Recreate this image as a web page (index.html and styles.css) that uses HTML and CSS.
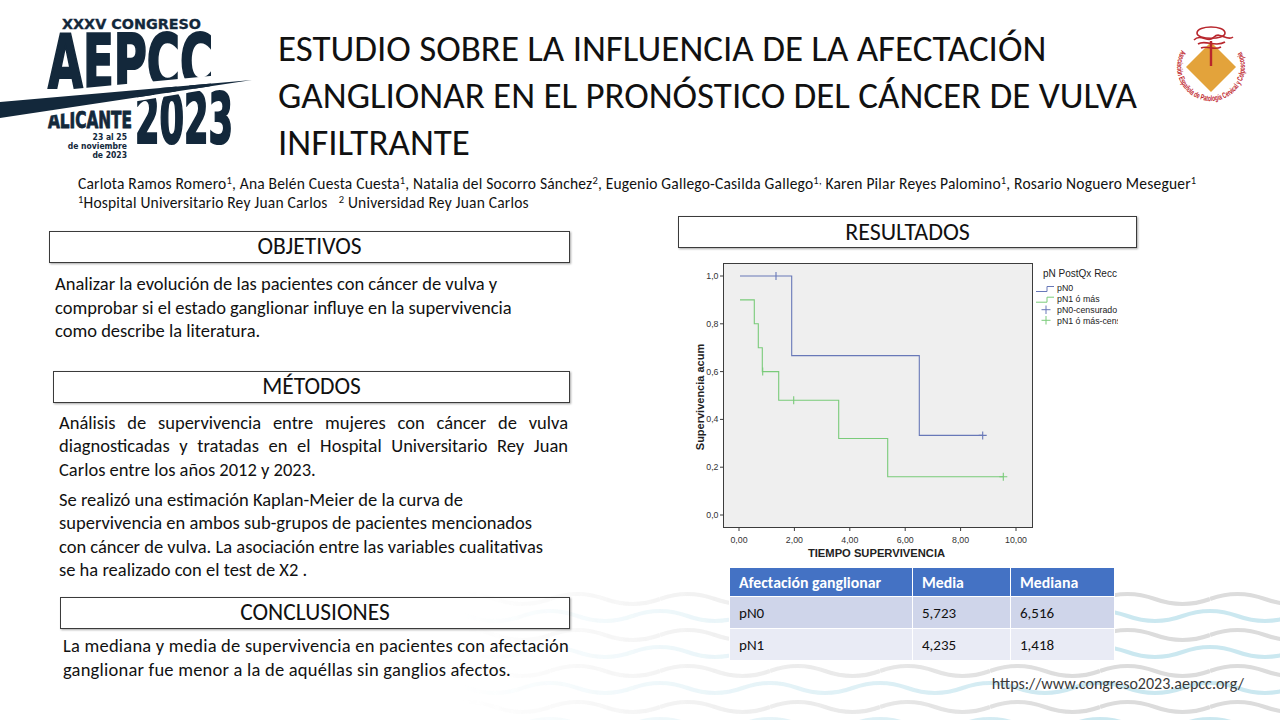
FILE: index.html
```html
<!DOCTYPE html>
<html lang="es">
<head>
<meta charset="utf-8">
<title>Estudio sobre la influencia de la afectación ganglionar</title>
<link rel="stylesheet" href="styles.css">
</head>
<body>
<div class="page">
  <svg class="waves" width="1280" height="130" viewBox="0 0 1280 130" aria-hidden="true">
    <defs>
      <pattern id="wv" width="110" height="36" patternUnits="userSpaceOnUse">
        <path d="M0 9 Q27.5 -1 55 9 T110 9" stroke="#d6d6d6" stroke-width="4" fill="none"/>
        <path d="M-27.5 26 Q0 16 27.5 26 T82.5 26 T137.5 26" stroke="#c3e4ee" stroke-width="4" fill="none"/>
      </pattern>
      <linearGradient id="fg" x1="0" x2="1" y1="0" y2="0">
        <stop offset="0.36" stop-color="#000"/>
        <stop offset="0.85" stop-color="#fff"/>
      </linearGradient>
      <mask id="fade"><rect width="1280" height="130" fill="url(#fg)"/></mask>
    </defs>
    <rect x="0" y="0" width="1280" height="130" fill="url(#wv)" mask="url(#fade)" opacity="0.85"/>
  </svg>

  <header class="top">
    <svg class="brand" width="260" height="165" viewBox="0 0 260 165">
      <g fill="#13283b" stroke="#13283b" font-family="'DejaVu Sans Condensed','DejaVu Sans',sans-serif" font-weight="700">
        <text x="62" y="28.5" font-size="14.5" stroke-width="0.3" textLength="139" lengthAdjust="spacingAndGlyphs">XXXV CONGRESO</text>
        <text x="48" y="88" font-size="75" stroke-width="2.2" textLength="165" lengthAdjust="spacingAndGlyphs">AEPCC</text>
        <text x="48" y="128" font-size="23" stroke-width="0.8" textLength="84" lengthAdjust="spacingAndGlyphs">ALICANTE</text>
        <text x="135" y="143" font-size="70" stroke-width="2.2" textLength="98" lengthAdjust="spacingAndGlyphs">2023</text>
        <g font-size="8.5" text-anchor="end" stroke-width="0">
          <text x="127" y="140">23 al 25</text>
          <text x="127" y="149">de noviembre</text>
          <text x="127" y="158">de 2023</text>
        </g>
      </g>
      <polygon points="0,96 252,72 252,80 0,102" fill="#fff"/>
      <polygon points="0,118 252,80 252,82 0,124" fill="#fff"/>
      <polygon points="0,102 252,80 0,118" fill="#13283b"/>
    </svg>
    <h1 class="title">ESTUDIO SOBRE LA INFLUENCIA DE LA AFECTACIÓN<br>GANGLIONAR EN EL PRONÓSTICO DEL CÁNCER DE VULVA<br>INFILTRANTE</h1>
    <svg class="seal" width="90" height="95" viewBox="0 0 90 95">
      <defs><path id="ring" d="M13.6 31 A34 34 0 1 0 72.4 31"/></defs>
      <polygon points="43,23 68,48 43,73 18,48" fill="#e3a33b"/>
      <g fill="none" stroke="#b8262c" stroke-width="1.6">
        <path d="M29 14 C29 6 57 6 57 14 C57 21 29 21 29 14Z"/>
        <path d="M26 21 C33 14 40 25 46 18 C52 12 59 23 65 18"/>
        <path d="M30 25 C37 20 48 29 57 23"/>
        <path d="M33 29 C40 26 46 32 53 28"/>
      </g>
      <path d="M43 22V47" stroke="#b8262c" stroke-width="2.4"/>
      <text font-size="8" font-weight="700" fill="#c0282e" font-family="'Liberation Sans',sans-serif"><textPath href="#ring" textLength="140" lengthAdjust="spacingAndGlyphs">Asociación Española de Patología Cervical y Colposcopia</textPath></text>
    </svg>
  </header>

  <div class="authors">
    <p>Carlota Ramos Romero<sup>1</sup>, Ana Belén Cuesta Cuesta<sup>1</sup>, Natalia del Socorro Sánchez<sup>2</sup>, Eugenio Gallego-Casilda Gallego<sup>1,</sup> Karen Pilar Reyes Palomino<sup>1</sup>, Rosario Noguero Meseguer<sup>1</sup></p>
    <p><sup>1</sup>Hospital Universitario Rey Juan Carlos&nbsp;&nbsp;&nbsp;<sup>2</sup> Universidad Rey Juan Carlos</p>
  </div>

  <main class="cols">
    <section class="left">
      <div class="sec sec-obj">
        <h2 class="box">OBJETIVOS</h2>
        <p class="text">Analizar la evolución de las pacientes con cáncer de vulva y<br>comprobar si el estado ganglionar influye en la supervivencia<br>como describe la literatura.</p>
      </div>
      <div class="sec sec-met">
        <h2 class="box">MÉTODOS</h2>
        <p class="text just"><span class="jl">Análisis de supervivencia entre mujeres con cáncer de vulva</span><span class="jl">diagnosticadas y tratadas en el Hospital Universitario Rey Juan</span><span>Carlos entre los años 2012 y 2023.</span></p>
        <p class="text second">Se realizó una estimación Kaplan-Meier de la curva de<br>supervivencia en ambos sub-grupos de pacientes mencionados<br>con cáncer de vulva. La asociación entre las variables cualitativas<br>se ha realizado con el test de X2 .</p>
      </div>
      <div class="sec sec-con">
        <h2 class="box">CONCLUSIONES</h2>
        <p class="text">La mediana y media de supervivencia en pacientes con afectación<br>ganglionar fue menor a la de aquéllas sin ganglios afectos.</p>
      </div>
    </section>

    <section class="right">
      <h2 class="box res-box">RESULTADOS</h2>
      <svg class="km" width="428" height="305" viewBox="0 0 428 305">
        <rect x="33.5" y="5.5" width="309" height="264" fill="#efefef" stroke="#3c3c3c" stroke-width="1"/>
        <g stroke="#3c3c3c" stroke-width="1">
          <path d="M30 18H33.5M30 65.8H33.5M30 113.6H33.5M30 161.4H33.5M30 209.2H33.5M30 257H33.5"/>
          <path d="M49 269.5V273M104.4 269.5V273M159.8 269.5V273M215.2 269.5V273M270.6 269.5V273M326 269.5V273"/>
        </g>
        <g font-family="'Liberation Sans',Arial,sans-serif" font-size="8.8" fill="#333" text-anchor="end">
          <text x="28.5" y="21">1,0</text>
          <text x="28.5" y="68.8">0,8</text>
          <text x="28.5" y="116.6">0,6</text>
          <text x="28.5" y="164.4">0,4</text>
          <text x="28.5" y="212.2">0,2</text>
          <text x="28.5" y="260">0,0</text>
        </g>
        <g font-family="'Liberation Sans',Arial,sans-serif" font-size="8.8" fill="#333" text-anchor="middle">
          <text x="49" y="284.5">0,00</text>
          <text x="104.4" y="284.5">2,00</text>
          <text x="159.8" y="284.5">4,00</text>
          <text x="215.2" y="284.5">6,00</text>
          <text x="270.6" y="284.5">8,00</text>
          <text x="326" y="284.5">10,00</text>
        </g>
        <g fill="none" stroke-width="1.1">
          <path d="M50 18H101.7V97.6H229.3V177.4H292.7" stroke="#6878b8"/>
          <path d="M86 14V22M292.7 173.4V181.4M288.7 177.4H296.7" stroke="#6878b8"/>
          <path d="M50 41.9H64.3V65.8H68.3V89.7H72.3V113.6H88.7V142.3H148.7V180.5H197.7V218.8H313.3" stroke="#7acb7a"/>
          <path d="M72.7 109.6V117.6M103.7 138.3V146.3M313.3 214.8V222.8M309.3 218.8H317.3" stroke="#7acb7a"/>
        </g>
        <g font-family="'Liberation Sans',Arial,sans-serif" fill="#222">
          <text x="353" y="18.5" font-size="10">pN PostQx Recc</text>
          <g font-size="8.8">
            <text x="367" y="33.3">pN0</text>
            <text x="367" y="44">pN1 ó más</text>
            <text x="367" y="55">pN0-censurado</text>
            <text x="367" y="65.6">pN1 ó más-censurado</text>
          </g>
        </g>
        <g fill="none" stroke-width="1">
          <path d="M346 33.5H357V28.5H364" stroke="#6878b8"/>
          <path d="M346 44.2H357V39.2H364" stroke="#7acb7a"/>
          <path d="M356 47.5V56M351.5 51.7H360.5" stroke="#6878b8"/>
          <path d="M356 58V66.5M351.5 62.3H360.5" stroke="#7acb7a"/>
        </g>
        <text transform="translate(10,139) rotate(-90)" text-anchor="middle" font-family="'Liberation Sans',Arial,sans-serif" font-weight="700" font-size="11" fill="#222" dominant-baseline="central">Supervivencia acum</text>
        <text x="186.5" y="299" text-anchor="middle" font-family="'Liberation Sans',Arial,sans-serif" font-weight="700" font-size="11.2" fill="#222">TIEMPO SUPERVIVENCIA</text>
      </svg>
      <table class="stats">
        <colgroup><col class="c1"><col class="c2"><col class="c3"></colgroup>
        <thead><tr><th>Afectación ganglionar</th><th>Media</th><th>Mediana</th></tr></thead>
        <tbody>
          <tr class="r1"><td>pN0</td><td>5,723</td><td>6,516</td></tr>
          <tr class="r2"><td>pN1</td><td>4,235</td><td>1,418</td></tr>
        </tbody>
      </table>
      <p class="url">https://www.congreso2023.aepcc.org/</p>
    </section>
  </main>
</div>
</body>
</html>
```

FILE: styles.css
```css
* { box-sizing: border-box; margin: 0; padding: 0; }
html, body { width: 1280px; height: 720px; overflow: hidden; background: #fff; }
body { font-family: Carlito, Calibri, Lato, sans-serif; color: #111; }

.page { position: relative; width: 1280px; height: 720px; overflow: hidden; }
.waves { position: absolute; left: 0; bottom: 0; z-index: 0; }
.top, .authors, .cols { position: relative; z-index: 1; }

.top { display: flex; height: 174px; }
.brand { flex: none; display: block; }
.title {
  flex: none;
  width: 880px;
  margin: 25px 0 0 18px;
  font-size: 37px;
  line-height: 47px;
  font-weight: 400;
  white-space: nowrap;
  color: #111;
}
.seal { flex: none; display: block; margin: 19px 0 0 10px; }

.authors { padding-left: 78px; font-size: 15.5px; letter-spacing: 0.2px; line-height: 19px; height: 38px; white-space: nowrap; }
.authors sup { font-size: 10.5px; line-height: 0; vertical-align: 5px; }

.cols { display: flex; align-items: flex-start; }
.left { flex: none; width: 521px; margin-left: 49px; padding-top: 19px; }
.right { flex: none; width: 566px; margin-left: 108px; padding-top: 4px; }

.box {
  height: 32px;
  border: 1.5px solid #3b3b3b;
  box-shadow: 1px 1px 2px rgba(0, 0, 0, 0.35);
  font-size: 23.5px;
  font-weight: 400;
  line-height: 29px;
  text-align: center;
  color: #111;
}

.text { font-size: 18.5px; line-height: 23.5px; white-space: nowrap; }
.just span { display: block; }
.just .jl { text-align: justify; text-align-last: justify; }

.sec-obj .text { margin: 9px 0 0 6px; }
.sec-met { margin-top: 28.5px; }
.sec-met .box { margin-left: 4px; }
.sec-met .just { margin: 7.5px 2px 0 10px; }
.sec-met .second { margin: 6.5px 0 0 10px; }
.sec-con { margin-top: 15.5px; }
.sec-con .box { margin-left: 11px; }
.sec-con .text { margin: 4.5px 0 0 14px; line-height: 24.5px; letter-spacing: 0.22px; }

.res-box { width: 459px; font-size: 24px; }
.km { display: block; margin: 10px 0 0 12px; overflow: hidden; }

.stats {
  border-collapse: collapse;
  table-layout: fixed;
  width: 385px;
  margin: 4px 0 0 51px;
  font-size: 15px;
}
.stats .c1 { width: 183px; }
.stats .c2 { width: 98px; }
.stats .c3 { width: 104px; }
.stats th, .stats td { border: 1.5px solid #fff; text-align: left; padding: 0 0 0 9px; }
.stats th { background: #4472c4; color: #fff; font-weight: 700; height: 29px; font-size: 15.8px; }
.stats .r1 td { background: #cfd5ea; height: 32px; }
.stats .r2 td { background: #e9ebf5; height: 32px; }

.url { margin-top: 14px; text-align: right; font-size: 16px; line-height: 18px; color: #3a3a3a; }
```
